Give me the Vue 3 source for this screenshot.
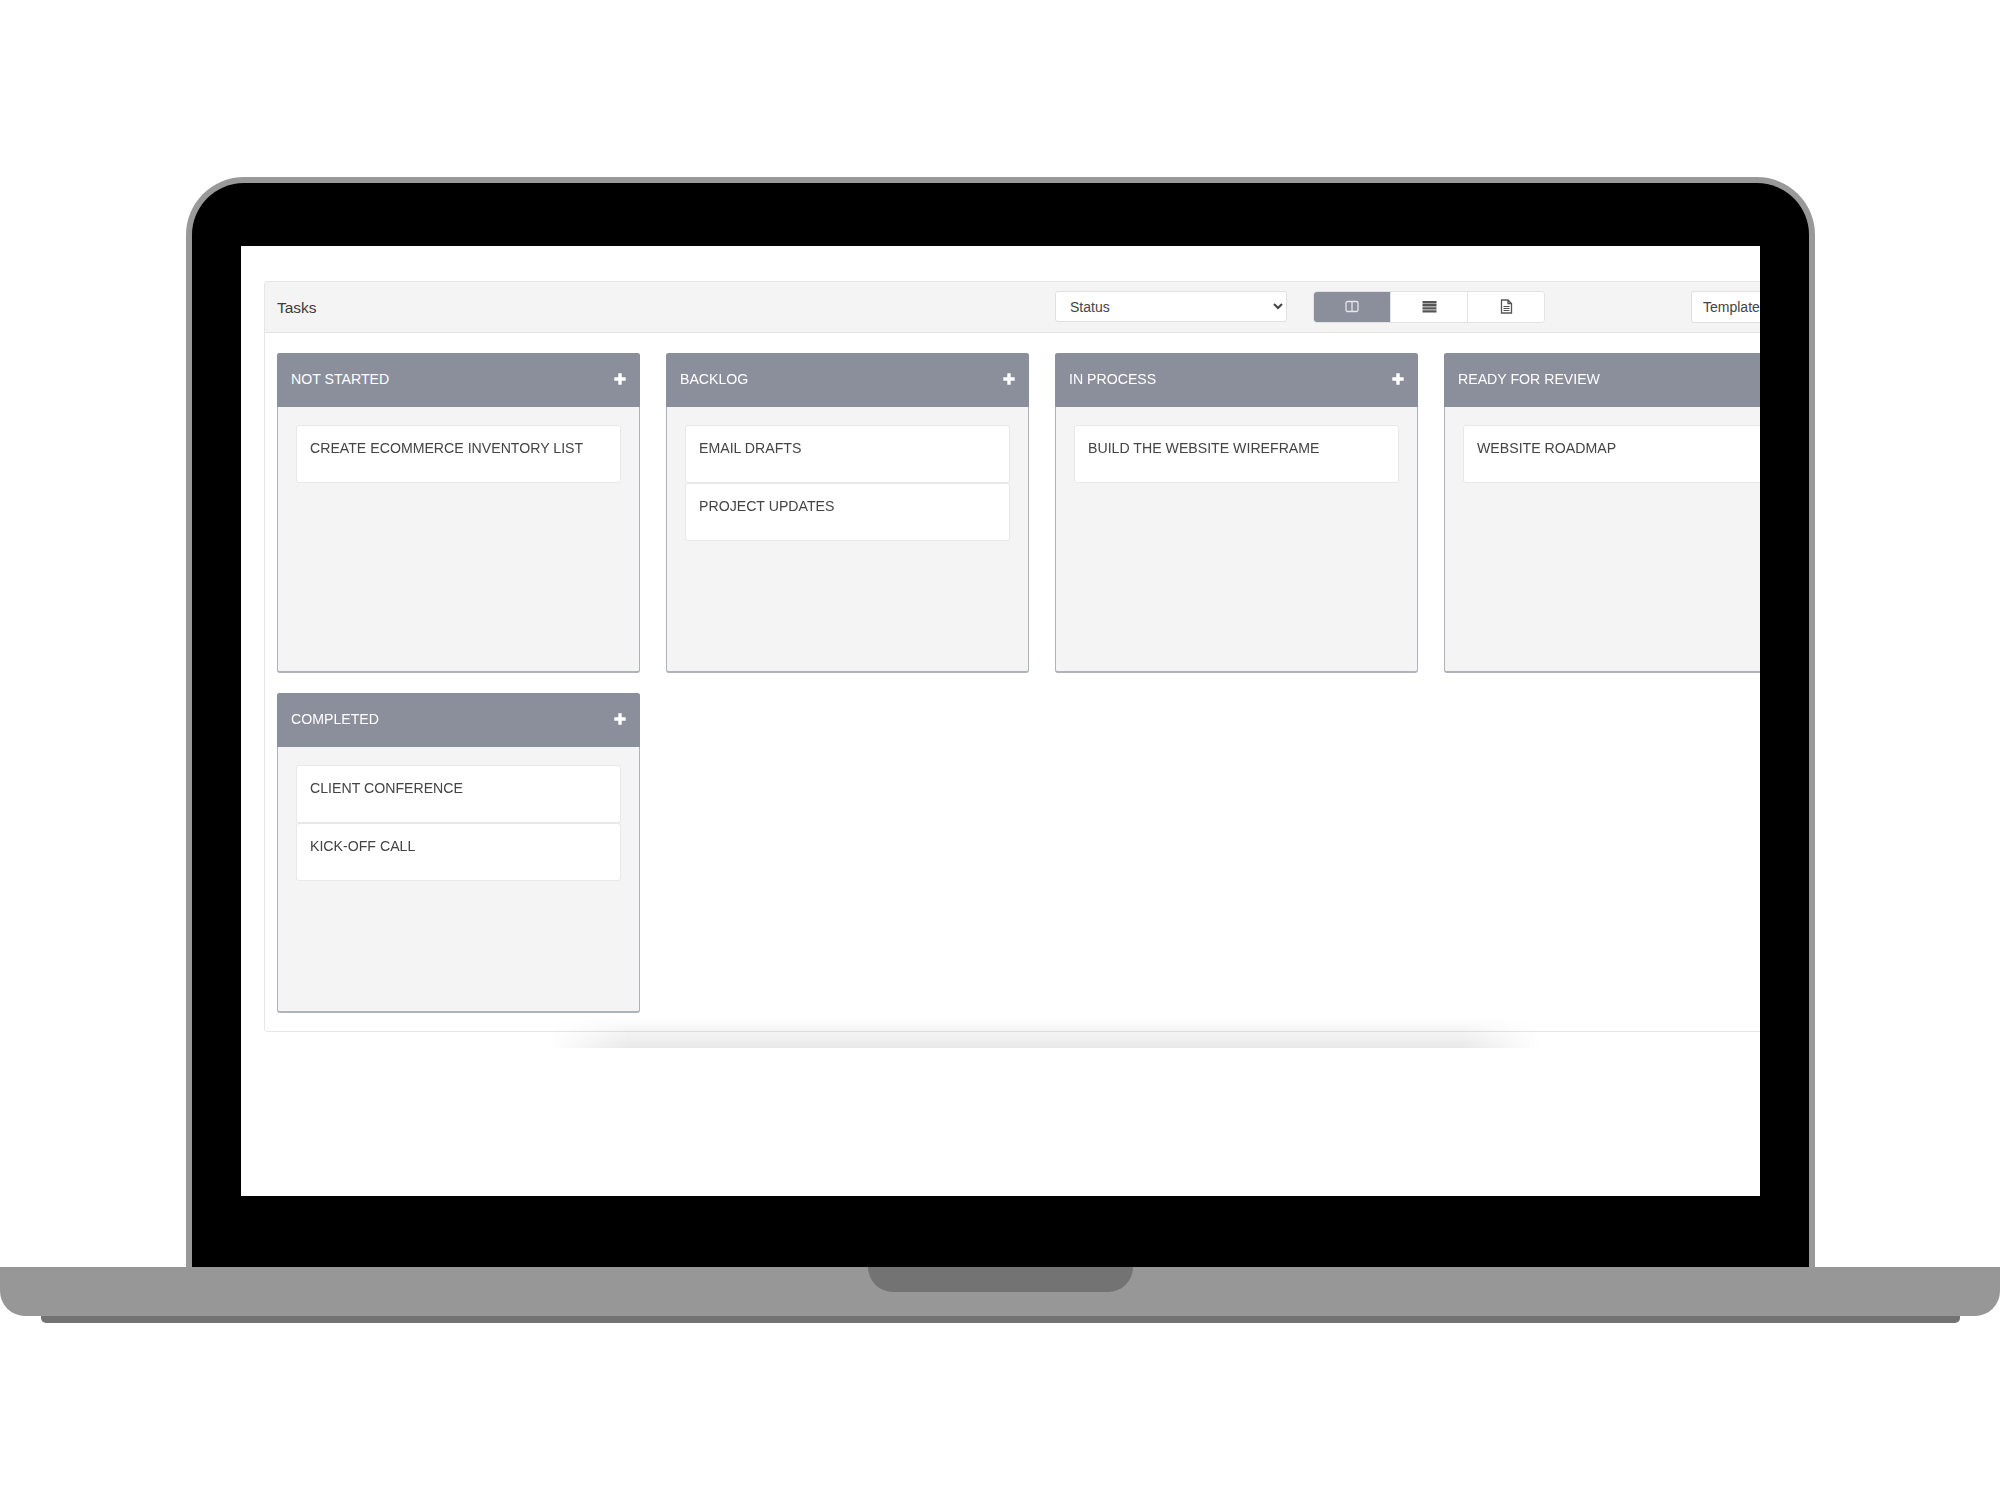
<template>
  <div class="page">
    <div class="lid">
      <div class="screen">
        <div class="panel">
          <div class="toolbar">
            <div class="title">Tasks</div>
            <select class="status">
              <option>Status</option>
            </select>
            <div class="views">
              <button class="view active">
                <svg width="14" height="13" viewBox="0 0 14 13">
                  <rect x="1" y="1.5" width="12" height="10" rx="1.5" fill="none" stroke="currentColor" stroke-width="1.3" />
                  <path d="M7 1.5v10" stroke="currentColor" stroke-width="1.3" />
                </svg>
              </button>
              <button class="view">
                <svg width="15" height="13" viewBox="0 0 15 13">
                  <path d="M0.5 1h14v2.4H0.5zM0.5 4.1h14v2.4H0.5zM0.5 7.2h14v2.4H0.5zM0.5 10.3h14v2.2H0.5z" fill="currentColor" />
                </svg>
              </button>
              <button class="view">
                <svg width="13" height="15" viewBox="0 0 13 15">
                  <path d="M1.5 1h6.5l3.5 3.5V14h-10z M8 1v3.5h3.5" fill="none" stroke="currentColor" stroke-width="1.3" />
                  <path d="M3.5 7.5h6M3.5 9.5h6M3.5 11.5h6" stroke="currentColor" stroke-width="1.1" />
                </svg>
              </button>
            </div>
            <button class="templates">Templates</button>
          </div>
          <div class="board">
            <div v-for="col in columns" :key="col.name" class="column">
              <div class="column-head">
                <span>{{ col.name }}</span>
                <svg class="plus" width="12" height="12" viewBox="0 0 12 12">
                  <path d="M6 0.3v11.4M0.3 6h11.4" stroke="#fff" stroke-width="3.4" />
                </svg>
              </div>
              <div class="column-body">
                <div v-for="task in col.tasks" :key="task" class="card">{{ task }}</div>
              </div>
            </div>
          </div>
        </div>
        <div class="fade"></div>
      </div>
    </div>
    <div class="base">
      <div class="notch"></div>
    </div>
    <div class="foot"></div>
  </div>
</template>

<script setup>
const columns = [
  { name: 'NOT STARTED', tasks: ['CREATE ECOMMERCE INVENTORY LIST'] },
  { name: 'BACKLOG', tasks: ['EMAIL DRAFTS', 'PROJECT UPDATES'] },
  { name: 'IN PROCESS', tasks: ['BUILD THE WEBSITE WIREFRAME'] },
  { name: 'READY FOR REVIEW', tasks: ['WEBSITE ROADMAP'] },
  { name: 'COMPLETED', tasks: ['CLIENT CONFERENCE', 'KICK-OFF CALL'] }
];
</script>

<style>
html, body {
  background: #fff;
}
</style>

<style scoped>
.page {
  width: 2000px;
  height: 1500px;
  padding-top: 177px;
  box-sizing: border-box;
  overflow: hidden;
  font-family: "Liberation Sans", Arial, sans-serif;
}

.lid {
  width: 1629px;
  height: 1090px;
  margin-left: 186px;
  box-sizing: border-box;
  padding: 63px 49px 71px;
  background: #000;
  border: 6px solid #999;
  border-bottom: 0;
  border-radius: 58px 58px 0 0;
}

.screen {
  position: relative;
  height: 950px;
  padding: 35px 0 0 22.5px;
  box-sizing: border-box;
  background: #fff;
  overflow: hidden;
}

/* the source shot is a scaled-up capture, so everything on screen is a bit soft */
.panel {
  width: 1570px;
  height: 751px;
  box-sizing: border-box;
  border: 1px solid #e6e6e6;
  border-radius: 3px;
  filter: blur(0.45px);
}

.toolbar {
  display: flex;
  align-items: center;
  height: 51px;
  padding: 0 0 1px 12.5px;
  box-sizing: border-box;
  background: #f4f4f4;
  border-bottom: 1px solid #e3e3e3;
}

.title {
  width: 778px;
  padding-top: 3px;
  font-size: 15.5px;
  color: #3c3c3c;
}

.status {
  width: 232px;
  height: 31px;
  padding: 0 10px;
  font: 14px "Liberation Sans", Arial, sans-serif;
  color: #444;
  background: #fff;
  border: 1px solid #e0e0e0;
  border-radius: 3px;
}

.views {
  display: flex;
  width: 232px;
  height: 32px;
  margin-left: 26px;
  box-sizing: border-box;
  background: #fff;
  border: 1px solid #e3e3e3;
  border-radius: 4px;
  overflow: hidden;
}

.view {
  flex: 1;
  display: flex;
  align-items: center;
  justify-content: center;
  padding: 0;
  color: #555;
  background: #fff;
  border: 0;
  border-left: 1px solid #e3e3e3;
}

.view.active {
  color: #e6e7ea;
  background: #8b8e9b;
  border-left: 0;
}

.templates {
  width: 120px;
  height: 32px;
  margin-left: 146px;
  padding: 0 0 0 11px;
  text-align: left;
  font: 14px "Liberation Sans", Arial, sans-serif;
  color: #444;
  background: #fff;
  border: 1px solid #e0e0e0;
  border-radius: 3px;
}

.board {
  display: flex;
  flex-wrap: wrap;
  gap: 19.5px 26.5px;
  padding: 20px 0 0 12.5px;
}

.column {
  width: 362.5px;
  height: 320px;
  box-sizing: border-box;
  background: #f4f4f4;
  border: 1px solid #b0b2ba;
  border-bottom-width: 2px;
  border-radius: 3px;
}

.column-head {
  display: flex;
  align-items: center;
  justify-content: space-between;
  height: 52px;
  margin: -1px -1px 0;
  padding: 0 14px 2px;
  font-size: 14.15px;
  color: #fff;
  background: #8b8e9b;
  border-radius: 3px 3px 0 0;
}

.column-body {
  padding: 18px 18px 0;
}

.card {
  height: 58px;
  box-sizing: border-box;
  padding: 14px 13px 0;
  font-size: 14.15px;
  color: #444;
  background: #fff;
  border: 1px solid #e8e8e8;
  border-radius: 3px;
}

.fade {
  position: absolute;
  left: 309px;
  top: 771px;
  width: 990px;
  height: 31px;
  background: linear-gradient(to bottom, rgba(0, 0, 0, 0), rgba(0, 0, 0, 0.09));
  -webkit-mask-image: linear-gradient(to right, transparent, #000 8%, #000 92%, transparent);
  mask-image: linear-gradient(to right, transparent, #000 8%, #000 92%, transparent);
}

.base {
  position: relative;
  height: 49px;
  background: #979797;
  border-radius: 0 0 25px 25px;
}

.notch {
  position: absolute;
  left: 868px;
  top: 0;
  width: 265px;
  height: 25px;
  background: #737373;
  border-radius: 0 0 25px 25px;
}

.foot {
  width: 1919px;
  height: 7px;
  margin-left: 41px;
  background: #737373;
  border-radius: 0 0 5px 5px;
}
</style>
